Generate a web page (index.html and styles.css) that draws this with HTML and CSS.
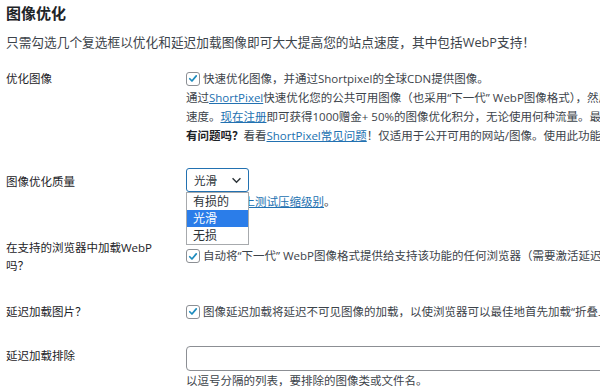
FILE: index.html
```html
<!DOCTYPE html>
<html lang="zh-CN">
<head>
    <meta charset="UTF-8">
    <meta name="viewport" content="width=device-width, initial-scale=1.0">
    <title>图像优化</title>
    <link rel="stylesheet" href="styles.css">
</head>
<body>
    <div class="page">
        <h2 class="title">图像优化</h2>
        <p class="intro">只需勾选几个复选框以优化和延迟加载图像即可大大提高您的站点速度，其中包括WebP支持！</p>

        <div class="row row-optimize">
            <div class="label">优化图像</div>
            <div class="field">
                <label class="check">
                    <span class="box"><svg viewBox="0 0 14 14" width="14" height="14"><path d="M3.2 7.3 L5.8 9.9 L10.8 4" fill="none" stroke="#1e8cbe" stroke-width="2" stroke-linecap="round" stroke-linejoin="round"/></svg></span>
                    快速优化图像，并通过Shortpixel的全球CDN提供图像。
                </label>
                <p class="desc">
                    通过<a href="#">ShortPixel</a>快速优化您的公共可用图像（也采用“下一代” WebP图像格式），然后通过其全球CDN提供，以提高您的站点<br>
                    速度。<a href="#">现在注册</a>即可获得1000赠金+ 50%的图像优化积分，无论使用何种流量。最多可节省您的带宽<br>
                    <strong>有问题吗？</strong>看看<a href="#">ShortPixel常见问题</a>！仅适用于公开可用的网站/图像。使用此功能前请确认
                </p>
            </div>
        </div>

        <div class="row row-quality">
            <div class="label">图像优化质量</div>
            <div class="field">
                <div class="select-wrap">
                    <div class="select">
                        <span>光滑</span>
                        <svg viewBox="0 0 12 8" width="11" height="7"><path d="M1.5 1.5 L6 6 L10.5 1.5" fill="none" stroke="#2c3338" stroke-width="1.6"/></svg>
                    </div>
                    <ul class="options">
                        <li>有损的</li>
                        <li class="selected">光滑</li>
                        <li>无损</li>
                    </ul>
                </div>
                <p class="desc"><a href="#">在您的网站上测试压缩级别</a>。</p>
            </div>
        </div>

        <div class="row row-webp">
            <div class="label">在支持的浏览器中加载WebP<br>吗？</div>
            <div class="field">
                <label class="check">
                    <span class="box"><svg viewBox="0 0 14 14" width="14" height="14"><path d="M3.2 7.3 L5.8 9.9 L10.8 4" fill="none" stroke="#1e8cbe" stroke-width="2" stroke-linecap="round" stroke-linejoin="round"/></svg></span>
                    自动将“下一代” WebP图像格式提供给支持该功能的任何浏览器（需要激活延迟加载）。
                </label>
            </div>
        </div>

        <div class="row row-lazy">
            <div class="label">延迟加载图片？</div>
            <div class="field">
                <label class="check">
                    <span class="box"><svg viewBox="0 0 14 14" width="14" height="14"><path d="M3.2 7.3 L5.8 9.9 L10.8 4" fill="none" stroke="#1e8cbe" stroke-width="2" stroke-linecap="round" stroke-linejoin="round"/></svg></span>
                    图像延迟加载将延迟不可见图像的加载，以使浏览器可以最佳地首先加载“折叠上方”的内容。
                </label>
            </div>
        </div>

        <div class="row row-exclude">
            <div class="label">延迟加载排除</div>
            <div class="field">
                <input type="text" class="text-input">
                <p class="desc">以逗号分隔的列表，要排除的图像类或文件名。</p>
            </div>
        </div>
    </div>
</body>
</html>
```

FILE: styles.css
```css
body {
    margin: 0;
    padding: 0;
    background-color: #fff;
    color: #3c434a;
    font-family: "Open Sans", "Noto Sans CJK SC", sans-serif;
    overflow: hidden;
}

.page {
    width: 900px;
    padding: 0 6px;
}

.title {
    margin: 0;
    padding-top: 3px;
    font-size: 15px;
    line-height: 20px;
    font-weight: 700;
    color: #1d2327;
}

.intro {
    margin: 9px 0 0;
    font-size: 12.7px;
    line-height: 20px;
    white-space: nowrap;
}

.row {
    display: flex;
    font-size: 11.5px;
    line-height: 19px;
    white-space: nowrap;
}

.label {
    width: 180px;
    flex-shrink: 0;
    color: #1d2327;
}

.field {
    flex: 1;
}

.desc {
    margin: 0;
}

a {
    color: #2271b1;
}

strong {
    color: #1d2327;
}

.check {
    display: flex;
    align-items: center;
    gap: 3px;
}

.box {
    width: 12px;
    height: 12px;
    border: 1px solid #8c8f94;
    border-radius: 3px;
    display: flex;
    align-items: center;
    justify-content: center;
}

.box svg {
    width: 13px;
    height: 13px;
}

.row-optimize {
    margin-top: 17px;
}

.row-quality {
    margin-top: 23px;
}

.row-quality .label {
    padding-top: 4px;
}

.select-wrap {
    position: relative;
    width: 63px;
}

.select {
    height: 22px;
    border: 1px solid #2271b1;
    border-radius: 3px;
    display: flex;
    align-items: center;
    justify-content: space-between;
    padding: 0 6px 0 7px;
    color: #2c3338;
}

.options {
    position: absolute;
    top: 24px;
    left: 0;
    width: 61px;
    margin: 0;
    padding: 0;
    list-style: none;
    background-color: #fff;
    border: 1px solid #a7aaad;
    z-index: 10;
}

.options li {
    height: 17px;
    line-height: 17px;
    padding-left: 6px;
    color: #2c3338;
    font-size: 12px;
}

.options li.selected {
    background-color: #2b7de9;
    color: #fff;
}

.row-webp {
    margin-top: 28px;
    line-height: 18px;
}

.row-webp .field {
    padding-top: 8px;
}

.row-lazy {
    margin-top: 27px;
}

.row-exclude {
    margin-top: 25px;
}

.text-input {
    display: block;
    box-sizing: border-box;
    width: 700px;
    height: 25px;
    margin: 0;
    border: 1px solid #8c8f94;
    border-radius: 4px;
    outline: none;
}
```
